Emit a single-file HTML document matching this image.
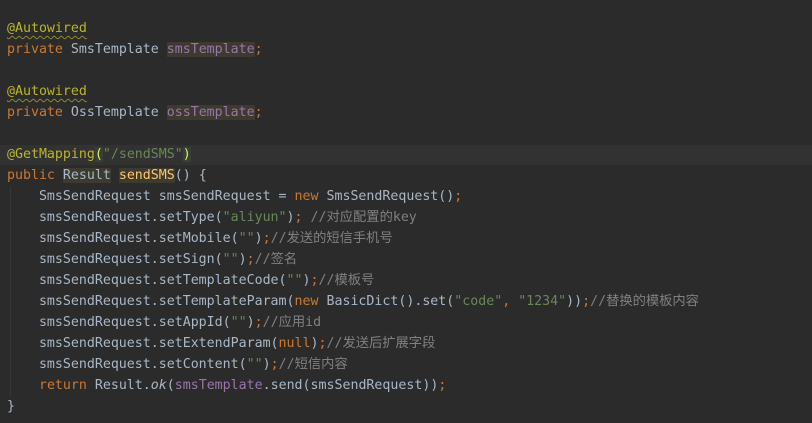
<!DOCTYPE html>
<html><head><meta charset="utf-8"><style>
html,body{margin:0;padding:0;background:#2b2b2b;width:812px;height:423px;overflow:hidden}
.c{position:absolute;left:7px;top:18px;font-family:"DejaVu Sans Mono","Noto Sans CJK SC",monospace;font-size:13.28px;line-height:21px;color:#a9b7c6}
.l{height:21px;white-space:pre}
.k{color:#cc7832}.a{color:#bbb529;text-decoration:underline wavy #8a8a30;text-decoration-thickness:1px;text-underline-offset:3px}.an{color:#bbb529}
.s{color:#6a8759}.f{color:#9876aa}.cm{color:#808080}.m{color:#ffc66d}
.h{background:#3d3b30}.hb{background:#344134}.i{font-style:italic}
.cur{position:absolute;left:0;top:145px;width:812px;height:20px;background:#323232}
.g{position:absolute;left:10px;top:186px;width:1px;height:210px;background:#373737}
</style></head><body>
<div class="cur"></div><div class="g"></div>
<div class="c">
<div class="l"><span class="a">@Autowired</span></div>
<div class="l"><span class="k">private </span>SmsTemplate <span class="f h">smsTemplate</span><span class="k">;</span></div>
<div class="l"></div>
<div class="l"><span class="a">@Autowired</span></div>
<div class="l"><span class="k">private </span>OssTemplate <span class="f h">ossTemplate</span><span class="k">;</span></div>
<div class="l"></div>
<div class="l"><span class="an">@GetMapping</span><span class="hb" style="color:#e8e864">(</span><span class="s">"/sendSMS"</span><span class="hb" style="color:#e8e864">)</span></div>
<div class="l"><span class="k">public </span><span class="h">Result</span> <span class="m h">sendSMS</span>() {</div>
<div class="l">    SmsSendRequest smsSendRequest = <span class="k">new </span>SmsSendRequest()<span class="k">;</span></div>
<div class="l">    smsSendRequest.setType(<span class="s">"aliyun"</span>)<span class="k">; </span><span class="cm">//对应配置的key</span></div>
<div class="l">    smsSendRequest.setMobile(<span class="s">""</span>)<span class="k">;</span><span class="cm">//发送的短信手机号</span></div>
<div class="l">    smsSendRequest.setSign(<span class="s">""</span>)<span class="k">;</span><span class="cm">//签名</span></div>
<div class="l">    smsSendRequest.setTemplateCode(<span class="s">""</span>)<span class="k">;</span><span class="cm">//模板号</span></div>
<div class="l">    smsSendRequest.setTemplateParam(<span class="k">new </span>BasicDict().set(<span class="s">"code"</span><span class="k">, </span><span class="s">"1234"</span>))<span class="k">;</span><span class="cm">//替换的模板内容</span></div>
<div class="l">    smsSendRequest.setAppId(<span class="s">""</span>)<span class="k">;</span><span class="cm">//应用id</span></div>
<div class="l">    smsSendRequest.setExtendParam(<span class="k">null</span>)<span class="k">;</span><span class="cm">//发送后扩展字段</span></div>
<div class="l">    smsSendRequest.setContent(<span class="s">""</span>)<span class="k">;</span><span class="cm">//短信内容</span></div>
<div class="l">    <span class="k">return </span>Result.<span class="i">ok</span>(<span class="f">smsTemplate</span>.send(smsSendRequest))<span class="k">;</span></div>
<div class="l">}</div>
</div>
</body></html>
